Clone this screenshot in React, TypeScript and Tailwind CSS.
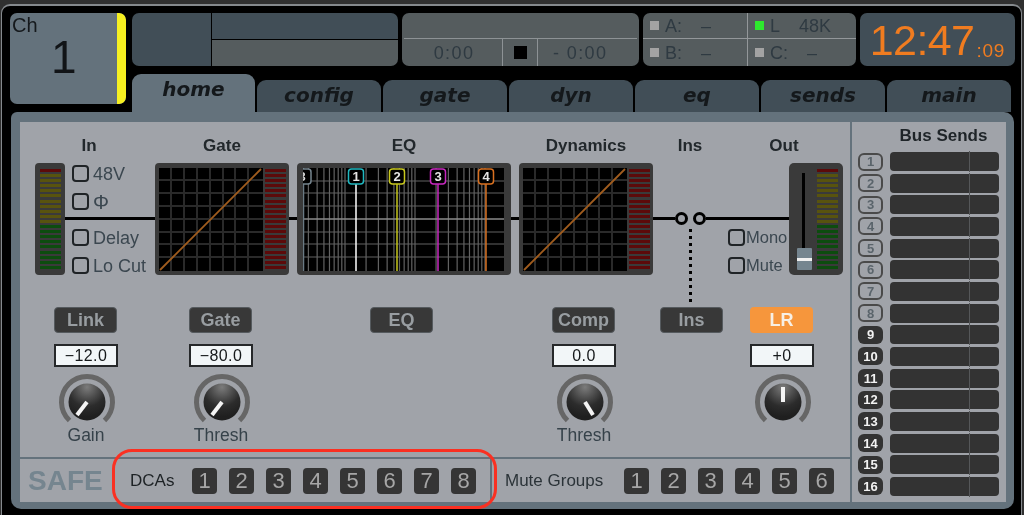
import React from "react";

const SANS = "[font-family:'Liberation_Sans',Arial,sans-serif]";

function Meter({ className = "" }: { className?: string }) {
  const bars = Array.from({ length: 20 }, (_, i) => i);
  return (
    <div className={`flex flex-col justify-between h-[100px] w-[21px] ${className}`}>
      {bars.map((i) => (
        <div
          key={i}
          className={`h-[3px] ${i === 0 ? "bg-[#5c0a0a]" : i <= 10 ? "bg-[#58530e]" : "bg-[#0c4c0e]"}`}
        />
      ))}
    </div>
  );
}

function RedMeter() {
  return (
    <div className="flex flex-col justify-between h-[100px] w-[21px]">
      {Array.from({ length: 20 }, (_, i) => (
        <div key={i} className="h-[3px] bg-[#5c0a0a]" />
      ))}
    </div>
  );
}

function Curve() {
  const s = [12, 25, 38, 51, 64, 76, 89];
  return (
    <svg width="104" height="103" viewBox="0 0 104 103" className="block shrink-0">
      <rect width="104" height="103" fill="#000" />
      {s.map((v) => (
        <g key={v}>
          <line x1={v} x2={v} y1="0" y2="103" stroke="#2a2a2a" strokeWidth="2" />
          <line y1={v} y2={v} x1="0" x2="104" stroke="#2a2a2a" strokeWidth="2" />
        </g>
      ))}
      <line x1="1" y1="102" x2="102" y2="1" stroke="#a05c1e" strokeWidth="1.8" />
    </svg>
  );
}

function DynGraph() {
  return (
    <div className="w-[134px] h-[112px] bg-[#3a3a3a] rounded-[4px] flex items-start pt-[5px] pl-[4px] gap-[2px] shrink-0">
      <Curve />
      <div className="pt-[1px]">
        <RedMeter />
      </div>
    </div>
  );
}

function EqGraph() {
  const freqs = [
    30, 40, 50, 60, 70, 80, 90, 100, 200, 300, 400, 500, 600, 700, 800, 900, 1000, 2000, 3000, 4000, 5000, 6000, 7000,
    8000, 9000, 10000,
  ];
  const xs = freqs.map((f) => 42 + 70 * Math.log10(f / 100));
  const ys = [13, 25, 38, 64, 76, 89];
  const bands = [
    { x: 53, box: "#20b8c0", line: "#ffffff", n: "1" },
    { x: 94, box: "#c8c81e", line: "#c8c81e", n: "2" },
    { x: 135, box: "#c828c0", line: "#c828c0", n: "3" },
    { x: 183, box: "#d87020", line: "#d87020", n: "4" },
  ];
  return (
    <div className="w-[214px] h-[112px] bg-[#3a3a3a] rounded-[4px] pt-[5px] pl-[6px] shrink-0">
      <svg width="201" height="103" viewBox="0 0 201 103" className="block">
        <rect width="201" height="103" fill="#000" />
        {xs.map((x, i) => (
          <line key={i} x1={x} x2={x} y1="0" y2="103" stroke="#626262" strokeWidth="1.2" />
        ))}
        {ys.map((y) => (
          <line key={y} x1="0" x2="201" y1={y} y2={y} stroke="#626262" strokeWidth="1.2" />
        ))}
        <line x1="0" x2="201" y1="51" y2="51" stroke="#8a8a8a" strokeWidth="1.6" />
        <line x1="0.5" x2="0.5" y1="0" y2="103" stroke="#6a7a84" strokeWidth="1.5" />
        <rect x="-8" y="1" width="16" height="15" rx="3" fill="#000" stroke="#75858f" strokeWidth="1.5" />
        <text x="-1" y="13" fontSize="13" fontWeight="700" fill="#d8d8d8" textAnchor="middle" fontFamily="Liberation Sans">3</text>
        {bands.map((b) => (
          <g key={b.n}>
            <line x1={b.x} x2={b.x} y1="16" y2="103" stroke={b.line} strokeWidth="1.5" />
            <rect x={b.x - 7.5} y="1" width="15" height="15" rx="3" fill="#000" stroke={b.box} strokeWidth="1.5" />
            <text x={b.x} y="13" fontSize="13" fontWeight="700" fill="#e4e4e4" textAnchor="middle" fontFamily="Liberation Sans">{b.n}</text>
          </g>
        ))}
      </svg>
    </div>
  );
}

function Check({ label, size = "text-[18px]", gap = "gap-[4px]" }: { label: string; size?: string; gap?: string }) {
  return (
    <div className={`flex items-center h-[17px] ${gap}`}>
      <div className="w-[17px] h-[17px] border-2 border-[#1f2326] rounded-[4px] shrink-0" />
      <span className={`${size} leading-none text-[#3b4750] whitespace-nowrap`}>{label}</span>
    </div>
  );
}

function Knob({ dx, dy, x0 = 0, y0 = 0 }: { dx: number; dy: number; x0?: number; y0?: number }) {
  return (
    <svg width="60" height="60" viewBox="-30 -30 60 60" className="block shrink-0">
      <defs>
        <radialGradient id="kn" cx="50%" cy="10%" r="80%">
          <stop offset="0%" stopColor="#7c7c7c" />
          <stop offset="40%" stopColor="#4a4a4a" />
          <stop offset="65%" stopColor="#2c2c2c" />
          <stop offset="100%" stopColor="#1f1f1f" />
        </radialGradient>
      </defs>
      <path d="M -17.5 18.5 A 25.5 25.5 0 1 1 17.5 18.5" fill="none" stroke="#666666" strokeWidth="5" />
      <circle r="18.5" fill="url(#kn)" />
      <line x1={x0} y1={y0} x2={dx} y2={dy} stroke="#f4f4f4" strokeWidth="4" />
    </svg>
  );
}

function ParamCol({
  btn,
  value,
  knob,
  caption,
  active,
  className = "",
  w = "w-[64px]",
}: {
  btn: string;
  value?: string;
  knob?: React.ReactNode;
  caption?: string;
  active?: boolean;
  className?: string;
  w?: string;
}) {
  return (
    <div className={`flex flex-col items-center shrink-0 ${w} ${className}`}>
      <div
        className={`self-start w-[63px] h-[26px] rounded-[4px] flex items-center justify-center font-bold text-[18px] leading-none ${
          active ? "bg-[#f6963c] text-[#f7efe4]" : "bg-[#383838] border border-[#555a5e] text-[#989da1]"
        }`}
      >
        {btn}
      </div>
      {value && (
        <div className="mt-[11px] w-[64px] h-[23px] bg-[#f2f6f8] border-2 border-[#26282a] flex items-center justify-center text-[16px] leading-none tracking-[0.4px] text-[#15181a]">
          {value}
        </div>
      )}
      {knob && <div className="mt-[5px] ml-[2px]">{knob}</div>}
      {caption && (
        <div className="-mt-[7px] text-[17.5px] leading-[20px] text-[#36424a] h-[20px]">{caption}</div>
      )}
    </div>
  );
}

function NumBtn({ n }: { n: number }) {
  return (
    <div className="w-[25px] h-[26px] rounded-[4px] bg-[#353535] flex items-center justify-center text-[#a6a6a6] text-[22px] leading-none shrink-0">
      {n}
    </div>
  );
}

function BusRow({ n }: { n: number }) {
  const on = n > 8;
  return (
    <div className="flex items-center gap-[7px] h-[19px]">
      <div
        className={`w-[25px] h-[18px] rounded-[6px] flex items-center justify-center text-[13px] font-bold leading-none ${
          on ? "bg-[#333333] text-[#f2f2f2]" : "border-2 border-[#4a4a4a] text-[#5a646b]"
        }`}
      >
        {n}
      </div>
      <div className="relative w-[109px] h-[19px] rounded-[4px] bg-[#333333]">
        <div className="absolute left-[79px] -top-[1px] -bottom-[1px] w-px bg-[#555759]" />
      </div>
    </div>
  );
}

function Tab({ label, active, className = "" }: { label: string; active?: boolean; className?: string }) {
  return (
    <div
      className={`flex items-center justify-center rounded-t-[9px] [font-family:'DejaVu_Sans',sans-serif] font-bold italic text-[20px] leading-none text-[#14181b] shrink-0 ${
        active ? "w-[123px] h-[38px] bg-[#64727c] pb-[8px]" : "w-[124px] h-[32px] bg-[#414e57] pb-[2px]"
      } ${className}`}
    >
      {label}
    </div>
  );
}

export default function App() {
  return (
    <div className={`relative w-[1024px] h-[515px] overflow-hidden bg-[#303030] pt-[4px] blur-[0.5px] ${SANS}`}>
      <div className="w-[1021px] ml-[1px] h-[511px] bg-black rounded-t-[9px] border-t-2 border-l border-r border-[#85898d]">
        {/* Header */}
        <div className="flex pl-[8px] pt-[7px] gap-[6px] h-[106px]">
          <div className="w-[116px] h-[91px] bg-[#64727c] rounded-[7px] flex overflow-hidden shrink-0">
            <div className="flex-1 flex flex-col">
              <div className="pl-[2px] pt-[2px] text-[20px] leading-[20px] text-[#15191c]">Ch</div>
              <div className="pl-[41px] mt-[1px] text-[46px] leading-[42px] text-[#111417] font-normal">1</div>
            </div>
            <div className="w-[9px] bg-[#f6f021] rounded-r-[6px]" />
          </div>
          <div className="flex flex-col">
            <div className="flex gap-[4px] h-[53px]">
              {/* name */}
              <div className="w-[266px] rounded-[7px] overflow-hidden flex bg-black gap-px">
                <div className="w-[79px] bg-[#414e57]" />
                <div className="flex-1 flex flex-col gap-px">
                  <div className="flex-1 bg-[#414e57]" />
                  <div className="flex-1 bg-[#555c5e]" />
                </div>
              </div>
              {/* transport */}
              <div className="w-[237px] rounded-[7px] bg-[#555c5e] flex flex-col text-[#2f3a42] text-[18px] tracking-[1.4px] leading-none px-[2px]">
                <div className="h-[26px] border-b border-[#8d9295]" />
                <div className="flex-1 flex items-center">
                  <div className="w-[99px] h-full flex items-center justify-center border-r border-[#8d9295] pl-[2px]">0:00</div>
                  <div className="w-[35px] h-full flex items-center justify-center border-r border-[#8d9295]">
                    <div className="w-[13px] h-[13px] bg-black" />
                  </div>
                  <div className="flex-1 pl-[15px] whitespace-nowrap">- 0:00</div>
                </div>
              </div>
              {/* status */}
              <div className="w-[213px] rounded-[7px] bg-[#555c5e] text-[#2f3a42] text-[18px] leading-none grid grid-cols-[105px_1fr] grid-rows-[26px_1fr]">
                <div className="flex items-center pl-[7px] border-b border-r border-[#93979a]">
                  <div className="w-[9px] h-[9px] bg-[#a3a3a3] mr-[6px]" />A:<span className="ml-[19px]">–</span>
                </div>
                <div className="flex items-center pl-[7px] border-b border-[#93979a]">
                  <div className="w-[9px] h-[9px] bg-[#2ee82e] mr-[6px]" />L<span className="ml-[19px]">48K</span>
                </div>
                <div className="flex items-center pl-[7px] border-r border-[#93979a]">
                  <div className="w-[9px] h-[9px] bg-[#a3a3a3] mr-[6px]" />B:<span className="ml-[19px]">–</span>
                </div>
                <div className="flex items-center pl-[7px]">
                  <div className="w-[9px] h-[9px] bg-[#a3a3a3] mr-[6px]" />C:<span className="ml-[19px]">–</span>
                </div>
              </div>
              {/* clock */}
              <div className="w-[155px] rounded-[7px] bg-[#414e57] flex items-end justify-center pb-[6px] text-[#f07c20] leading-none whitespace-nowrap">
                <span className="text-[43px] leading-[40px] tracking-[-0.6px]">12:47</span>
                <span className="text-[19px] leading-[18px] ml-[2px] tracking-[0.8px]">:09</span>
              </div>
            </div>
            <div className="flex items-end gap-[2px] mt-[8px] h-[38px]">
              <Tab label="home" active />
              <Tab label="config" />
              <Tab label="gate" />
              <Tab label="dyn" />
              <Tab label="eq" />
              <Tab label="sends" />
              <Tab label="main" />
            </div>
          </div>
        </div>

        {/* Main panel */}
        <div className="ml-[9px] w-[1003px] h-[397px] bg-[#64727c] rounded-b-[10px] rounded-tl-[6px] rounded-tr-[10px] pt-[10px] pl-[9px] pr-[8px] pb-[7px] flex">
          <div className="w-[830px] flex flex-col shrink-0">
            {/* Home area */}
            <div className="h-[335px] bg-[#a0a3a9] pt-[14px]">
              {/* Headings */}
              <div className="flex h-[27px] font-bold text-[17px] leading-[20px] text-[#22282c] text-center">
                <div className="w-[135px] pl-[3px]">In</div>
                <div className="w-[134px]">Gate</div>
                <div className="w-[230px]">EQ</div>
                <div className="w-[134px]">Dynamics</div>
                <div className="w-[74px]">Ins</div>
                <div className="w-[114px]">Out</div>
              </div>
              {/* Graphs */}
              <div className="flex h-[112px] pl-[15px]">
                <div className="w-[30px] h-[112px] bg-[#3a3a3a] rounded-[4px] flex justify-center pt-[6px] shrink-0">
                  <Meter />
                </div>
                <div className="w-[90px] pl-[7px] pt-[2px] shrink-0 relative">
                  <Check label="48V" />
                  <div className="mt-[11px] flex items-center h-[17px] gap-[4px]">
                    <div className="w-[17px] h-[17px] border-2 border-[#1f2326] rounded-[4px] shrink-0" />
                    <span className="text-[20px] leading-none text-[#3b4750]">Φ</span>
                  </div>
                  <div className="mt-[7px] -ml-[7px] w-[90px] h-[3px] bg-black" />
                  <div className="mt-[9px]">
                    <Check label="Delay" />
                  </div>
                  <div className="mt-[11px]">
                    <Check label="Lo Cut" />
                  </div>
                </div>
                <DynGraph />
                <div className="w-[8px] h-[3px] mt-[54px] bg-black shrink-0" />
                <EqGraph />
                <div className="w-[8px] h-[3px] mt-[54px] bg-black shrink-0" />
                <DynGraph />
                {/* Ins section */}
                <div className="w-[136px] shrink-0 pt-[54px]">
                  <div className="flex items-center h-[3px]">
                    <div className="w-[22px] h-[3px] bg-black" />
                    <div className="w-[13px] h-[13px] rounded-full border-[3px] border-black shrink-0" />
                    <div className="w-[5px]" />
                    <div className="w-[13px] h-[13px] rounded-full border-[3px] border-black shrink-0" />
                    <div className="flex-1 h-[3px] bg-black" />
                  </div>
                  <div className="flex mt-[9px]">
                    <div className="w-[75px] pl-[36px] shrink-0">
                      <div className="flex flex-col gap-[4px] h-[72px] shrink-0">
                        {Array.from({ length: 11 }, (_, i) => (
                          <div key={i} className="w-[3px] h-[3px] bg-black shrink-0" />
                        ))}
                      </div>
                    </div>
                    <div className="flex flex-col gap-[11px]">
                      <Check label="Mono" size="text-[16.5px]" gap="gap-[1px]" />
                      <Check label="Mute" size="text-[16.5px]" gap="gap-[1px]" />
                    </div>
                  </div>
                </div>
                {/* Out */}
                <div className="w-[54px] h-[112px] bg-[#3a3a3a] rounded-[5px] flex shrink-0 relative">
                  <div className="w-[28px] flex justify-center pt-[10px] relative">
                    <div className="w-[3px] h-[78px] bg-black" />
                    <div className="absolute left-[8px] top-[85px] w-[15px] h-[22px] bg-[#75858f] rounded-[1px] flex items-center">
                      <div className="w-full h-[3px] bg-[#f0f0f0]" />
                    </div>
                  </div>
                  <div className="pt-[6px]">
                    <Meter />
                  </div>
                </div>
              </div>
              {/* Lower params */}
              <div className="flex pl-[34px] mt-[32px]">
                <ParamCol btn="Link" value="−12.0" knob={<Knob dx={-10} dy={13} />} caption="Gain" />
                <ParamCol btn="Gate" value="−80.0" knob={<Knob dx={-10} dy={13} />} caption="Thresh" className="ml-[71px]" />
                <ParamCol btn="EQ" className="ml-[117px]" w="w-[62px]" />
                <ParamCol btn="Comp" value="0.0" knob={<Knob dx={8} dy={13} />} caption="Thresh" className="ml-[120px]" />
                <ParamCol btn="Ins" className="ml-[44px]" w="w-[62px]" />
                <ParamCol btn="LR" value="+0" knob={<Knob dx={0} dy={-15} />} active className="ml-[28px]" />
              </div>
            </div>
            <div className="h-[2px] bg-[#64727c]" />
            {/* Bottom */}
            <div className="flex-1 bg-[#a0a3a9] flex items-center">
              <div className="w-[110px] pl-[8px] font-bold text-[28px] leading-none text-[#75858f] shrink-0">SAFE</div>
              <div className="w-[62px] text-[17px] leading-none text-[#1d2225] shrink-0">DCAs</div>
              <div className="flex gap-[12px] shrink-0">
                {[1, 2, 3, 4, 5, 6, 7, 8].map((n) => (
                  <NumBtn key={n} n={n} />
                ))}
              </div>
              <div className="w-[2px] h-full bg-[#64727c] ml-[14px] shrink-0" />
              <div className="w-[132px] pl-[13px] text-[17px] leading-none text-[#2b3338] whitespace-nowrap shrink-0">Mute Groups</div>
              <div className="flex gap-[12px] shrink-0">
                {[1, 2, 3, 4, 5, 6].map((n) => (
                  <NumBtn key={n} n={n} />
                ))}
              </div>
            </div>
          </div>
          <div className="w-[2px] bg-[#64727c] shrink-0" />
          {/* Bus sends */}
          <div className="flex-1 bg-[#a0a3a9] pl-[6px]">
            <div className="mt-[4px] h-[20px] font-bold text-[17px] leading-[20px] text-[#1e2428] text-center pl-[36px] pr-[13px] whitespace-nowrap">Bus Sends</div>
            <div className="mt-[6px] h-[344px] flex flex-col justify-between">
              {Array.from({ length: 16 }, (_, i) => (
                <BusRow key={i} n={i + 1} />
              ))}
            </div>
          </div>
        </div>
      </div>
      {/* Annotation */}
      <div className="absolute left-[112px] top-[449px] w-[385px] h-[60px] rounded-[20px] border-[3.5px] border-[#fa3022]" />
    </div>
  );
}
